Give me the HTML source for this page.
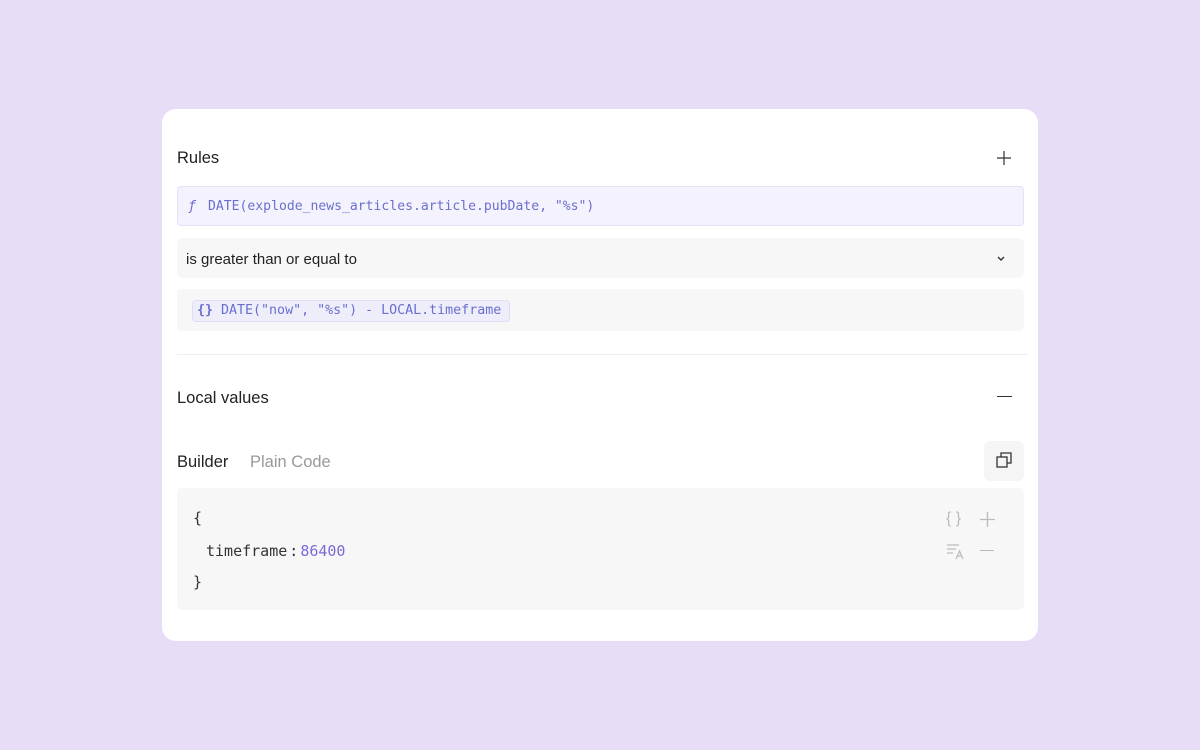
<!DOCTYPE html>
<html><head><style>
body{margin:0;width:1200px;height:750px;background:#e8ddf7;font-family:"Liberation Sans",sans-serif;position:relative;overflow:hidden}
.card{position:absolute;left:162px;top:109px;width:876px;height:532px;background:#fff;border-radius:14px}
.a{position:absolute}
.mono{font-family:"DejaVu Sans Mono","Liberation Mono",monospace}
.t{font-size:16.5px;color:#222}
</style></head><body>
<div class="card"></div>
<div class="a t" style="left:177px;top:149px">Rules</div>
<svg class="a" style="left:997px;top:151px" width="14" height="14"><path d="M7 0V14M0 7H14" stroke="#333" stroke-width="1.2"/></svg>
<div class="a" style="left:177px;top:186px;width:845px;height:38px;background:#f4f3fd;border:1px solid #e4e2f8;border-radius:4px"></div>
<div class="a mono" style="left:188px;top:199px;font-size:13.3px;color:#6a6fcf"><i>ƒ</i></div>
<div class="a mono" style="left:208px;top:199px;font-size:13.1px;color:#6a6fcf;white-space:pre">DATE(explode_news_articles.article.pubDate, "%s")</div>
<div class="a" style="left:177px;top:238px;width:847px;height:40px;background:#f7f7f7;border-radius:5px"></div>
<div class="a" style="left:186px;top:251px;font-size:15px;color:#222">is greater than or equal to</div>
<svg class="a" style="left:997px;top:256px" width="8" height="6"><path d="M1 1L4 4L7 1" stroke="#333" stroke-width="1.4" fill="none"/></svg>
<div class="a" style="left:177px;top:289px;width:847px;height:42px;background:#f7f7f7;border-radius:5px"></div>
<div class="a" style="left:192px;top:300px;width:316px;height:20px;background:#eeedfa;border:1px solid #e0def6;border-radius:4px"></div>
<div class="a mono" style="left:197px;top:303px;font-size:13.3px;color:#6a6fcf;white-space:pre"><b>{}</b> DATE("now", "%s") - LOCAL.timeframe</div>
<div class="a" style="left:177px;top:354px;width:851px;height:1px;background:#eeeeee"></div>
<div class="a t" style="left:177px;top:389px">Local values</div>
<div class="a" style="left:997px;top:396px;width:15px;height:1.3px;background:#333"></div>
<div class="a t" style="left:177px;top:453px">Builder</div>
<div class="a" style="left:250px;top:453px;font-size:16.5px;color:#999">Plain Code</div>
<div class="a" style="left:984px;top:441px;width:40px;height:40px;background:#f5f5f5;border-radius:6px"></div>
<svg class="a" style="left:996px;top:452px" width="17" height="17"><rect x="1" y="5" width="10" height="10" fill="none" stroke="#333" stroke-width="1.3"/><path d="M5 5V1H15V11H11" fill="none" stroke="#333" stroke-width="1.3"/></svg>
<div class="a" style="left:177px;top:488px;width:847px;height:122px;background:#f7f7f7;border-radius:5px"></div>
<div class="a mono" style="left:193px;top:509px;font-size:15px;color:#333">{</div>
<div class="a mono" style="left:206px;top:542px;font-size:15px;color:#333">timeframe<span style="margin:0 2px">:</span><span style="color:#7b6bd6">86400</span></div>
<div class="a mono" style="left:193px;top:573px;font-size:15px;color:#333">}</div>
<div class="a" style="left:946px;top:510px;font-size:16px;color:#bbb">{ }</div>
<svg class="a" style="left:980px;top:512px" width="15" height="15"><path d="M7.5 0V15M0 7.5H15" stroke="#bbb" stroke-width="1.3"/></svg>
<svg class="a" style="left:947px;top:543px" width="20" height="17"><path d="M0 2H12M0 6H9M0 10H6" stroke="#bbb" stroke-width="1.2"/><path d="M9 16L12.5 8L16 16M10.3 13H14.7" stroke="#bbb" stroke-width="1.2" fill="none"/></svg>
<div class="a" style="left:980px;top:550px;width:14px;height:1.3px;background:#bbb"></div>
</body></html>
